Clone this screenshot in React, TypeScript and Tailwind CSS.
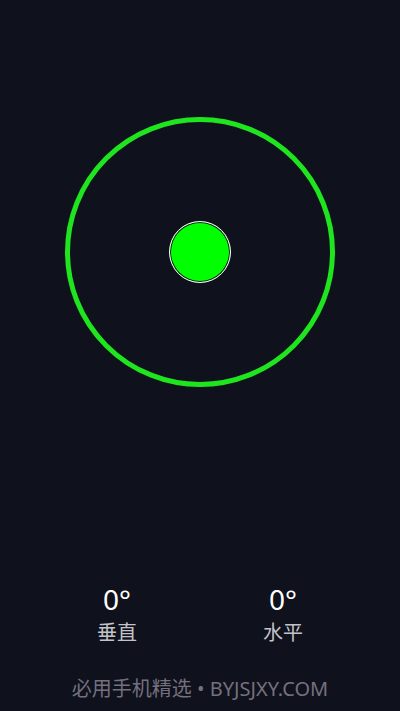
import React from "react";

export default function App() {
  return (
    <div
      className="w-[400px] h-[711px] bg-[#0f111c] flex flex-col items-center overflow-hidden"
      style={{ fontFamily: '"Noto Sans", "Noto Sans CJK SC", sans-serif' }}
    >
      <div className="mt-[117px] w-[270px] h-[270px] rounded-full border-[5px] border-[#1ee51e] flex items-center justify-center">
        <div className="w-[62px] h-[62px] rounded-full border border-white bg-[#00ff00] shadow-[inset_0_0_0_1px_#0f111c]" />
      </div>
      <div className="w-full px-[67px] mt-[195px] flex justify-between">
        <div className="w-[100px] flex flex-col items-center">
          <div className="text-[28px] leading-[34px] text-white">0°</div>
          <div className="text-[20px] leading-[28px] text-[#c4c4c8] mt-[3px]">垂直</div>
        </div>
        <div className="w-[100px] flex flex-col items-center">
          <div className="text-[28px] leading-[34px] text-white">0°</div>
          <div className="text-[20px] leading-[28px] text-[#c4c4c8] mt-[3px]">水平</div>
        </div>
      </div>
      <div className="mt-[28px] text-[20px] leading-[28px] text-[#75707f]">
        必用手机精选 • BYJSJXY.COM
      </div>
    </div>
  );
}
